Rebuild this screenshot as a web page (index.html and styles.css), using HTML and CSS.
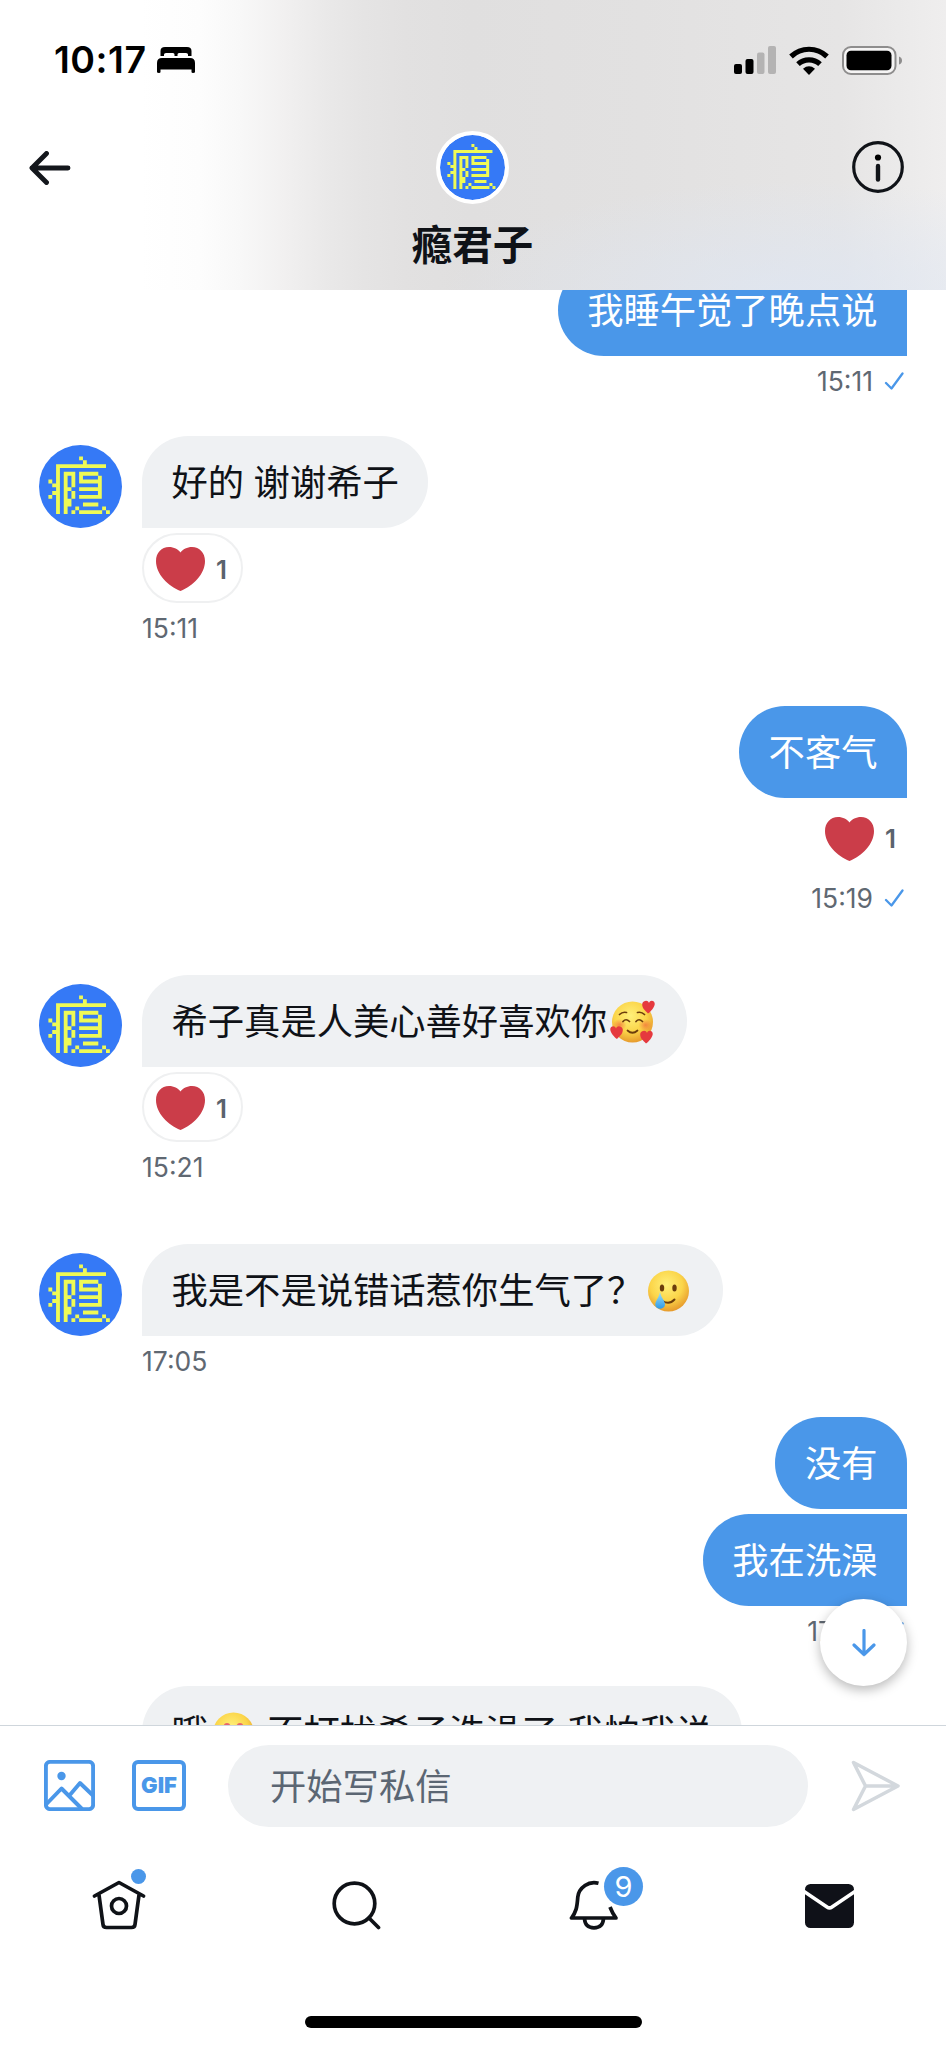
FILE: index.html
```
<!DOCTYPE html>
<html lang="zh-CN">
<head>
<meta charset="utf-8">
<title>瘾君子</title>
<link rel="stylesheet" href="styles.css">
</head>
<body>
<svg class="defs" aria-hidden="true">
  <defs>
    <radialGradient id="face" cx=".45" cy=".35" r=".65">
      <stop offset="0" stop-color="#fff07a"/><stop offset=".6" stop-color="#fbd549"/><stop offset="1" stop-color="#e79b2c"/>
    </radialGradient>
    <radialGradient id="blush"><stop offset="0" stop-color="#f2703c" stop-opacity=".75"/><stop offset="1" stop-color="#f2703c" stop-opacity="0"/></radialGradient>
    <linearGradient id="tear" x2="0" y2="1"><stop offset="0" stop-color="#9be0fb"/><stop offset="1" stop-color="#2f9ae6"/></linearGradient>
    <symbol id="heart" viewBox="0 0 49 44"><path fill="#cb3d49" d="M24.500 5.500C22 2.300 18 0 13 0 5.500 0 0 5.700 0 14 0 27 12 39 24.500 44 37 39 49 27 49 14 49 5.700 43.500 0 36 0 31 0 27 2.300 24.500 5.500Z"/></symbol>
    <symbol id="avatar" viewBox="0 0 83 83">
      <circle cx="41.5" cy="41.500" r="41.500" fill="#3579f6"/>
      <g transform="translate(9.400 11.500) scale(3.84)" fill="#effa55" shape-rendering="geometricPrecision">
        <path d="M8 0h1v1h-1zM9 1h1v1h-1zM2 2h13v1h-13zM2 3h1v12h-1zM0 6h1v1h-1zM1 7h1v1h-1zM1 9h1v1h-1zM0 10h1v1h-1z"/>
        <path d="M4 4h3v4h-1v-3h-1v3h1v1h1v2h-1v-2h-1v2h1v2h-1v2h-1z"/>
        <path d="M8 4h5v1h-5zM12.900 5h1v6h-1zM8 6h5v1h-5zM8 5h1v2h-1zM8 8h5v1h-5zM8 10h5v1h-5zM9 12h4v1h-4zM8 14h6v1h-6zM7 13h1v1h-1zM6 14h1v1h-1zM14 13h1v1h-1zM15 14h1v1h-1z"/>
      </g>
    </symbol>
    <symbol id="check" viewBox="0 0 20 18"><path d="M2 11 7.500 16.500 18.500 1.500" fill="none" stroke="#4a97e9" stroke-width="2.300" stroke-linecap="round" stroke-linejoin="round"/></symbol>
  </defs>
</svg>

<div class="screen">
  <header class="header">
    <div class="status">
      <div class="clock">
        <span class="time">10:17</span>
        <svg width="38" height="26" viewBox="0 0 38 26"><path d="M3.500 9V4Q3.500 0 8 0H30Q34.500 0 34.500 4V9H31V7.500Q31 6 29 6H22Q20.500 6 20.500 7.500V9H17.500V7.500Q17.500 6 16 6H9Q7 6 7 7.500V9ZM0 25V16Q0 11 5 11H33Q38 11 38 16V25Q38 26 36 26 34.500 26 34.500 25V22.500H3.500V25Q3.500 26 2 26 0 26 0 25Z"/></svg>
      </div>
      <div class="signals">
        <svg width="42" height="28" viewBox="0 0 42 28"><rect y="18" width="8" height="10" rx="2"/><rect x="11.500" y="13" width="8" height="15" rx="2"/><g fill="#b4b3b3"><rect x="23" y="6.500" width="7.500" height="21.500" rx="2"/><rect x="34" width="8" height="28" rx="2"/></g></svg>
        <svg width="40" height="29" viewBox="0 0 40 29"><g fill="none" stroke="#000" stroke-width="5.200"><path d="M2 10.500A26 26 0 0 1 38 10.500"/><path d="M9 18.200A16 16 0 0 1 31 18.200"/></g><path d="M20 29 14 22.700Q20 17.800 26 22.700Z"/></svg>
        <svg width="61" height="29" viewBox="0 0 61 29"><rect x="1" y="1" width="52.500" height="27" rx="8" fill="#f5f4f4" stroke="#8e8d8d" stroke-width="2"/><rect x="4.500" y="4.800" width="45" height="19.500" rx="4.500"/><path d="M57 10.500Q60 11.500 60 14.500T57 18.500Z" fill="#8e8d8d"/></svg>
      </div>
    </div>
    <div class="titlebar">
      <svg class="back" width="42" height="34" viewBox="0 0 42 34"><path d="M17.500 2.500 3 17 17.500 31.500M3 17H39" fill="none" stroke="#14171c" stroke-width="4.900" stroke-linecap="round" stroke-linejoin="round"/></svg>
      <div class="peer">
        <svg class="peer-avatar"><use href="#avatar"/></svg>
        <h1 class="peer-name">瘾君子</h1>
      </div>
      <svg class="info" width="52" height="52" viewBox="0 0 52 52"><circle cx="26" cy="26" r="24.300" fill="none" stroke="#101318" stroke-width="3.200"/><circle cx="26" cy="16.500" r="3.100"/><path d="M26 25V38.500" stroke="#101318" stroke-width="4.400" stroke-linecap="round"/></svg>
    </div>
  </header>

  <main class="chat">
    <div class="msg out">
      <div class="bubble joined">我睡午觉了晚点说</div>
      <div class="meta">15:11<svg class="tick"><use href="#check"/></svg></div>
    </div>

    <div class="msg in reacted">
      <div class="line"><svg class="avatar"><use href="#avatar"/></svg><div class="bubble">好的 谢谢希子</div></div>
      <div class="reaction"><svg class="heart"><use href="#heart"/></svg>1</div>
      <div class="meta">15:11</div>
    </div>

    <div class="msg out reacted">
      <div class="bubble">不客气</div>
      <div class="reaction bare"><svg class="heart"><use href="#heart"/></svg>1</div>
      <div class="meta">15:19<svg class="tick"><use href="#check"/></svg></div>
    </div>

    <div class="msg in reacted">
      <div class="line"><svg class="avatar"><use href="#avatar"/></svg><div class="bubble">希子真是人美心善好喜欢你<svg class="emoji" viewBox="0 0 49 46" role="img" aria-label="🥰">
        <circle cx="25" cy="23" r="20.500" fill="url(#face)"/>
        <ellipse cx="12" cy="26" rx="7" ry="6" fill="url(#blush)"/><ellipse cx="38" cy="26" rx="7" ry="6" fill="url(#blush)"/>
        <g fill="none" stroke="#6b3d0c" stroke-width="1.700" stroke-linecap="round"><path d="M12 15.500Q15 12.500 19 13.500M30 13.500Q34 12.500 37 15.500M15.500 22.500Q18.500 19 22 22.500M28.500 22.500Q31.500 19 35 22.500M20 31.500Q25 36 30 31.500"/></g>
        <g fill="#e5393e"><path d="M0-4.500C1-8.500 6.500-7 5.700-3 5 0 2 4-1 6-4 3-7.500 0-6.700-4-5.700-7-1-8 0-4.500Z" transform="translate(41.500 8.500)"/><path d="M0-4.500C-1-8.500-6.500-7-5.700-3-5 0-2 4 1 6 4 3 7.500 0 6.700-4 5.700-7 1-8 0-4.500Z" transform="translate(8.500 34)"/><path d="M0-4.500C1-8.500 6.500-7 5.700-3 5 0 2 4-1 6-4 3-7.500 0-6.700-4-5.700-7-1-8 0-4.500Z" transform="translate(39.500 38.500)"/></g>
      </svg></div></div>
      <div class="reaction"><svg class="heart"><use href="#heart"/></svg>1</div>
      <div class="meta">15:21</div>
    </div>

    <div class="msg in">
      <div class="line"><svg class="avatar"><use href="#avatar"/></svg><div class="bubble">我是不是说错话惹你生气了？<svg class="emoji" viewBox="0 0 49 46" role="img" aria-label="🥲">
        <circle cx="25" cy="23" r="20.500" fill="url(#face)"/>
        <g fill="#6b3d0c"><ellipse cx="18.500" cy="20" rx="2.200" ry="3.500"/><ellipse cx="31" cy="20" rx="2.200" ry="3.500"/></g>
        <path d="M19 33Q26 37 31 31.500" fill="none" stroke="#6b3d0c" stroke-width="2" stroke-linecap="round"/>
        <path d="M16.500 24C17.500 30 22 33 21.500 37 20.500 42 12.500 42 11.800 37 11.500 33 15.500 30 16.500 24Z" fill="url(#tear)"/>
      </svg></div></div>
      <div class="meta">17:05</div>
    </div>

    <div class="msg out">
      <div class="bubble">没有</div>
      <div class="bubble joined">我在洗澡</div>
      <div class="meta">17:06<svg class="tick"><use href="#check"/></svg></div>
    </div>

    <div class="msg in">
      <div class="line"><div class="bubble">哦<svg class="emoji" viewBox="0 0 49 46" role="img" aria-label="😊">
        <circle cx="25" cy="23" r="20.500" fill="url(#face)"/>
        <g fill="#e8656c"><circle cx="18.500" cy="16.500" r="3.400"/><circle cx="31.500" cy="16.500" r="3.400"/></g>
        <path d="M10 18.500Q12 15.500 14.500 16M35.500 16Q38 15.500 40 18.500" fill="none" stroke="#a8641c" stroke-width="1.600"/>
      </svg> 不打扰希子洗澡了 我怕我说</div></div>
    </div>

    <button class="jump" aria-label="下"><svg width="24" height="28" viewBox="0 0 24 28"><path d="M12 1.500V25.500M2 16 12 25.500 22 16" fill="none" stroke="#4a97e9" stroke-width="3.200" stroke-linecap="round" stroke-linejoin="round"/></svg></button>
  </main>

  <section class="composer">
    <svg width="51" height="51" viewBox="0 0 51 51" fill="none" stroke="#4a97e9" stroke-width="3.900"><rect x="1.900" y="1.900" width="47.200" height="47.200" rx="4"/><path d="M2.500 44 17.500 28.500 38 49M25 36 36 23 49 35.500" stroke-linejoin="round"/><circle cx="17.500" cy="16" r="4.200" fill="#4a97e9" stroke="none"/></svg>
    <div class="gif">GIF</div>
    <div class="field">开始写私信</div>
    <svg class="send" width="50" height="52" viewBox="0 0 50 52"><path d="M2.500 2.500 47 26 2.500 49.500 14.500 26ZM14.500 26H47" fill="none" stroke="#d3d8dd" stroke-width="3.500" stroke-linejoin="round"/></svg>
  </section>

  <nav class="tabs">
    <a class="tab"><svg class="home-icon" width="54" height="50" viewBox="0 0 54 50" fill="none" stroke="#0f1217" stroke-width="3.700" stroke-linecap="round" stroke-linejoin="round"><path d="M2.500 16 27 2.500 51.500 16M7 15 11 44.500Q11.300 47.500 14.500 47.500H39.500Q42.700 47.500 43 44.500L47 15"/><circle cx="27" cy="26" r="7.500"/></svg><i class="dot"></i></a>
    <a class="tab"><svg class="search" width="50" height="50" viewBox="0 0 50 50" fill="none" stroke="#0f1217" stroke-width="3.700" stroke-linecap="round"><circle cx="23.500" cy="23.500" r="20.300"/><path d="M38 38 47.500 47.500"/></svg></a>
    <a class="tab"><svg class="bell" width="50" height="50" viewBox="0 0 50 50" fill="none" stroke="#0f1217" stroke-width="3.700"><path d="M29.500 3.200Q22 1.300 16 5.500 9.500 10 8.800 17C8 28 7 32 2.500 38H47C44 34 42.500 31 41 27" stroke-linejoin="round"/><path d="M15.500 38.500Q16 47.800 25 47.800T34.500 38.500"/></svg><span class="badge">9</span></a>
    <a class="tab"><svg class="mail" width="49" height="44" viewBox="0 0 49 44"><rect width="49" height="44" rx="5.500" fill="#0f1118"/><path d="M-1 7.500 22 23Q24.500 24.700 27 23L50 7.500" fill="none" stroke="#fff" stroke-width="3.600"/></svg></a>
  </nav>
  <div class="home"></div>
</div>
</body>
</html>
```

FILE: styles.css
```
* { box-sizing: border-box; }
body { margin: 0; background: #fff; color: #0f1217; font-family: Inter, "Noto Sans CJK SC", sans-serif; }
svg { display: block; flex: none; }
.defs { position: absolute; width: 0; height: 0; }

.screen { width: 946px; height: 2048px; display: flex; flex-direction: column; overflow: hidden; }

/* Header */
.header {
  flex: none; height: 290px; display: flex; flex-direction: column;
  background:
    radial-gradient(ellipse 360px 120px at 800px 300px, rgba(222,230,243,.8), rgba(222,230,243,0)),
    linear-gradient(90deg, #fff 140px, #fdfdfd 200px, #f8f8f8 240px, #f1f0f0 285px, #eae9e9 325px, #e5e4e4 365px, #e2e1e1 405px, #e0dfdf 470px, #e2e1e1 640px, #e6e5e5 840px, #efeeee 946px);
}
.status { display: flex; justify-content: space-between; height: 120px; padding: 0 43px 0 54px; align-items: center; }
.clock, .signals { display: flex; align-items: center; }
.clock { gap: 11px; }
.time { font-size: 37.500px; font-weight: 600; line-height: 40px; color: #000; width: 92px; letter-spacing: .5px; white-space: nowrap; }
.signals { gap: 13px; }
.titlebar { display: grid; grid-template-columns: 200px 1fr 200px; padding: 11px 42px 0 29px; }
.back { margin-top: 20px; }
.peer { display: flex; flex-direction: column; align-items: center; padding-left: 12px; }
.peer-avatar { width: 73px; height: 73px; border: 4px solid #fff; border-radius: 50%; background: #fff; }
.peer-name { margin: 9px 0 0; font-size: 40.500px; line-height: 60px; font-weight: 700; font-family: "Noto Sans CJK SC", sans-serif; }
.info { margin-top: 10px; justify-self: end; }

/* Conversation */
.chat { position: relative; flex: none; height: 1435px; overflow: hidden; padding: 0 39px; display: flex; flex-direction: column; }
.msg { flex: none; display: flex; flex-direction: column; margin-bottom: 32.300px; }
.msg:first-child { margin-top: -26px; }
.msg.reacted { margin-bottom: 54.400px; }
.msg.out { align-items: flex-end; }
.line { display: flex; align-items: flex-end; justify-content: flex-start; gap: 20px; }
.line > .bubble:only-child, .in > .reaction, .in > .meta { margin-left: 103px; }
.avatar { width: 83px; height: 83px; }
.bubble {
  height: 92px; padding: 0 29.500px; border-radius: 46px 46px 46px 0; background: #eff1f3;
  font-family: "Noto Sans CJK SC", sans-serif; font-size: 36.300px; line-height: 88px; white-space: nowrap; word-spacing: 1.400px;
}
.out .bubble { background: #4a97e9; color: #fff; border-radius: 46px 46px 0 46px; }
.out .bubble.joined { border-radius: 46px 0 0 46px; }
.bubble + .bubble { margin-top: 5px; }
.emoji { display: inline-block; width: 50px; height: 46px; vertical-align: -10px; }
.reaction {
  align-self: flex-start; display: flex; align-items: center; gap: 11px;
  width: 101px; height: 70px; margin-top: 5px; padding: 2px 0 0 12px;
  border: 2px solid #eff0f1; border-radius: 35px; font-size: 26px; font-weight: 600; color: #5a636d;
}
.reaction.bare { align-self: flex-end; width: 96px; border-color: transparent; }
.heart { width: 49px; height: 44px; }
.meta { height: 48px; display: flex; align-items: center; font-size: 26.500px; line-height: 50px; color: #5f6872; padding-top: 2px; }
.tick { width: 20px; height: 18px; margin: 0 3px 0 11px; }
.jump {
  position: absolute; left: 820px; top: 1309px; width: 87px; height: 87px; padding: 0; border: 0; border-radius: 50%;
  background: #fff; box-shadow: 0 4px 12px rgba(0,0,0,.28); display: grid; place-items: center;
}

/* Composer */
.composer { flex: none; height: 122px; border-top: 1px solid #cfd6dc; display: flex; align-items: center; padding: 0 45px 2px 44px; }
.gif {
  margin-left: 37px; width: 54px; height: 51px; border: 4px solid #4a97e9; border-radius: 6px; color: #4a97e9;
  font-size: 22px; font-weight: 900; line-height: 43px; text-align: center;
}
.field {
  margin-left: 42px; width: 580px; height: 82px; border-radius: 41px; background: #eff1f3; padding-left: 42px;
  font-family: "Noto Sans CJK SC", sans-serif; font-size: 36.300px; line-height: 78px; color: #5b6673;
}
.send { margin-left: auto; }

/* Tab bar */
.tabs { flex: none; height: 118px; display: grid; grid-template-columns: repeat(4, 1fr); }
.tab { position: relative; display: flex; justify-content: center; padding-top: 33px; }
.home-icon, .search { margin-left: 2px; }
.bell { margin-left: 6px; }
.mail { margin: 4px 0 0 4px; }
.dot { position: absolute; left: 131px; top: 22px; width: 15px; height: 15px; border-radius: 50%; background: #4a97e9; }
.badge {
  position: absolute; left: 131px; top: 20px; width: 39px; height: 39px; border-radius: 50%; background: #4a97e9;
  color: #fff; font-size: 29px; line-height: 39px; text-align: center;
}
.home { flex: none; width: 337px; height: 12px; border-radius: 6px; background: #000; margin: 51px auto 0; }
```
